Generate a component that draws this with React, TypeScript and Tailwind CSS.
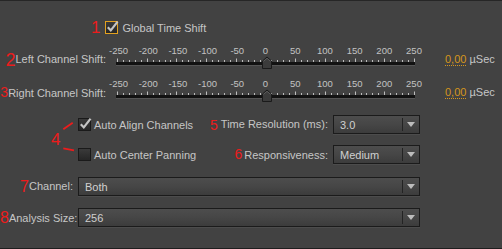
import React from 'react';

const TICK_START = 11;
const TICK_SPAN = 297;
const LABELS = [-250, -200, -150, -100, -50, 0, 50, 100, 150, 200, 250];

const Numeral = ({ n, size, drop }: { n: string; size: string; drop: string }) => (
  <span className={`text-[#ec1c1c] ${size} ${drop} leading-[14px]`}>{n}</span>
);

const CheckBox = ({ checked, focused }: { checked?: boolean; focused?: boolean }) => (
  <span
    className={`relative flex h-[13px] w-[13px] shrink-0 border bg-linear-to-b from-[#3a3a3a] to-[#262626] ${focused ? 'border-[#e3a11f]' : 'border-[#1a1a1a]'}`}
  >
    {checked && (
      <svg className="absolute -top-[2px] left-0" width="13" height="13" viewBox="0 0 13 13">
        <path d="M1.8 7.2 L4.8 10.4 L11.6 1.6" fill="none" stroke="#c4c4c4" strokeWidth="2.2" />
      </svg>
    )}
  </span>
);

const Select = ({ value, className }: { value: string; className?: string }) => (
  <div
    className={`flex h-[19px] items-center border border-[#1b1b1b] bg-linear-to-b from-[#4d4d4d] via-[#464646] to-[#3c3c3c] shadow-[0_1px_0_#4c4c4c] ${className ?? ''}`}
  >
    <span className="flex-1 pl-[6px] text-[11px] leading-[14px] text-[#d0d0d0]">{value}</span>
    <span className="h-[13px] w-px bg-[#232323]" />
    <span className="flex w-[16px] justify-center">
      <svg width="8" height="5" viewBox="0 0 8 5">
        <path d="M0 0H8L4 5Z" fill="#bcbcbc" />
      </svg>
    </span>
  </div>
);

const Slider = () => {
  const ticks = Array.from({ length: 51 }, (_, i) => Math.round(TICK_START + (i * TICK_SPAN) / 50) + 0.5);
  return (
    <svg width="318" height="26" viewBox="0 0 318 26" className="shrink-0">
      {LABELS.map((v, i) => (
        <text
          key={v}
          x={TICK_START + (i * TICK_SPAN) / 10 + (v < 0 ? 1.5 : 0)}
          y="10.3"
          textAnchor="middle"
          fontSize="9.5"
          fill="#c2c2c2"
          fontFamily="'Liberation Sans', Arial, sans-serif"
        >
          {v}
        </text>
      ))}
      {ticks.map((x, i) => (
        <line key={i} x1={x} x2={x} y1={i % 5 === 0 ? 14.5 : 16} y2="18" stroke="#bdbdbd" strokeWidth="1" />
      ))}
      <rect x="10" y="18" width="299" height="3" fill="#121212" />
      <line x1="10" x2="309" y1="21.5" y2="21.5" stroke="#555" strokeWidth="1" />
      <path d="M156.5 24.5 V17 L161 13 L165.5 17 V24.5 Z" fill="#3b3b3b" stroke="#1a1a1a" strokeWidth="1" />
      <path d="M157.5 17.3 L161 14.3 L164.5 17.3" fill="none" stroke="#5c5c5c" strokeWidth="1" />
    </svg>
  );
};

const ShiftRow = ({ n, size, drop, label, className }: { n: string; size: string; drop: string; label: string; className: string }) => (
  <div className={`flex h-[26px] items-start ${className}`}>
    <div className="w-[106px] shrink-0 whitespace-nowrap pt-[8px] text-right leading-[14px]">
      <Numeral n={n} size={size} drop={drop} />
      <span>{label}</span>
    </div>
    <Slider />
    <div className="ml-[21px] whitespace-nowrap pt-[8px] leading-[14px]">
      <span className="border-b border-dotted border-[#d5961c] text-[#d5961c]">0,00</span> <span>µSec</span>
    </div>
  </div>
);

export default function App() {
  return (
    <div className="h-[249px] w-[502px] overflow-hidden border-t border-b border-t-[#262626] border-b-[#1e1e1e] bg-[#424242] pt-[19px] font-['Liberation_Sans',Arial,sans-serif] text-[11px] text-[#c6c6c6]">
      {/* Global Time Shift */}
      <div className="flex h-[15px] items-center pl-[91px] leading-[14px]">
        <Numeral n="1" size="text-[17px]" drop="align-[-2px]" />
        <span className="ml-[5px]">
          <CheckBox checked focused />
        </span>
        <span className="ml-[4px]">Global Time Shift</span>
      </div>

      <ShiftRow n="2" size="text-[18px]" drop="align-[-3px]" label="Left Channel Shift:" className="mt-[9px]" />
      <ShiftRow n="3" size="text-[14px]" drop="align-[0px]" label="Right Channel Shift:" className="mt-[7px]" />

      <div className="relative mt-[12px]">
        {/* bracket for the two checkboxes */}
        <svg className="absolute left-[50px] top-0" width="30" height="40" viewBox="0 0 30 40">
          <line x1="22.7" y1="7.7" x2="13.3" y2="14.3" stroke="#ec1c1c" strokeWidth="1.8" />
          <line x1="13.3" y1="33.3" x2="24" y2="35.3" stroke="#ec1c1c" strokeWidth="1.8" />
          <text x="1" y="30" fontSize="17" fill="#ec1c1c" fontFamily="'Liberation Sans', Arial, sans-serif">4</text>
        </svg>

        <div className="flex h-[19px] items-center pl-[78px] pr-[82px] leading-[14px]">
          <CheckBox checked />
          <span className="ml-[3px]">Auto Align Channels</span>
          <div className="flex-1 whitespace-nowrap text-right">
            <Numeral n="5" size="text-[14px]" drop="align-[-2px]" />
            <span className="ml-[3px]">Time Resolution (ms):</span>
          </div>
          <Select value="3.0" className="ml-[5px] w-[87px]" />
        </div>

        <div className="mt-[11px] flex h-[19px] items-center pl-[78px] pr-[82px] leading-[14px]">
          <CheckBox />
          <span className="ml-[3px]">Auto Center Panning</span>
          <div className="flex-1 whitespace-nowrap text-right">
            <Numeral n="6" size="text-[14px]" drop="align-[0px]" />
            <span className="ml-[2px]">Responsiveness:</span>
          </div>
          <Select value="Medium" className="ml-[5px] w-[87px]" />
        </div>
      </div>

      <div className="mt-[13px] flex h-[19px] items-center pr-[82px] leading-[14px]">
        <div className="w-[73px] shrink-0 whitespace-nowrap text-right">
          <Numeral n="7" size="text-[16px]" drop="align-[-2px]" />
          <span>Channel:</span>
        </div>
        <Select value="Both" className="ml-[5px] flex-1" />
      </div>

      <div className="mt-[12px] flex h-[19px] items-center pr-[82px] leading-[14px]">
        <div className="w-[73px] shrink-0 whitespace-nowrap text-right">
          <Numeral n="8" size="text-[16px]" drop="align-[-1px]" />
          <span>Analysis Size:</span>
        </div>
        <Select value="256" className="ml-[5px] flex-1" />
      </div>
    </div>
  );
}
